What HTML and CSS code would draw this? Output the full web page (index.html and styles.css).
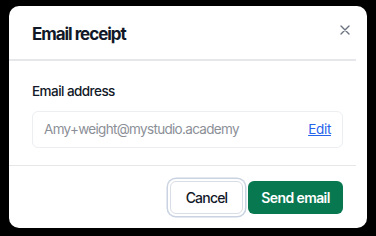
FILE: index.html
```html
<!DOCTYPE html>
<html>

<head>
	<link rel="stylesheet" href="styles.css">
</head>

<body>
	<div class="backdrop">
		<div class="dialog">
			<div class="header">
				<h1>Email receipt</h1>
				<button class="close" aria-label="Close">
					<svg width="10" height="10" viewBox="0 0 10 10">
						<path d="M1 1L9 9M9 1L1 9" stroke="#6b7280" stroke-width="1.4" stroke-linecap="round" />
					</svg>
				</button>
			</div>
			<div class="divider"></div>
			<div class="content">
				<label class="label">Email address</label>
				<div class="field">
					<span class="value">Amy+weight@mystudio.academy</span>
					<a class="edit" href="#">Edit</a>
				</div>
			</div>
			<div class="divider"></div>
			<div class="footer">
				<button class="btn cancel">Cancel</button>
				<button class="btn send">Send email</button>
			</div>
		</div>
	</div>
</body>

</html>
```

FILE: styles.css
```css
body {
	margin: 0;
	background-color: #000;
	font-family: Inter, "Noto Sans", sans-serif;
}

.backdrop {
	width: 376px;
	height: 236px;
	padding: 6px 9px 8px 9px;
	box-sizing: border-box;
}

.dialog {
	background-color: #fff;
	border-radius: 10px;
	height: 222px;
	display: flex;
	flex-direction: column;
}

.header {
	height: 53px;
	display: flex;
	align-items: center;
	justify-content: space-between;
	padding: 0 17px 0 23px;
	box-sizing: border-box;
}

h1 {
	margin: 0;
	font-size: 17px;
	font-weight: 700;
	color: #111827;
	letter-spacing: -1.05px;
	padding-top: 2px;
}

.close {
	border: none;
	background: none;
	padding: 0;
	width: 10px;
	height: 10px;
	display: flex;
	margin-top: -6px;
}

.divider {
	height: 1.5px;
	background-color: #e5e7eb;
	margin-right: 11px;
}

.content {
	padding: 21px 24px 0 23px;
	height: 104px;
	box-sizing: border-box;
}

.label {
	display: block;
	font-size: 13.5px;
	font-weight: 500;
	color: #111827;
	line-height: 18px;
	letter-spacing: -0.55px;
}

.field {
	margin-top: 11px;
	height: 37px;
	border: 1px solid #eceef2;
	border-radius: 6px;
	display: flex;
	align-items: center;
	justify-content: space-between;
	padding: 0 11px 0 11px;
	box-sizing: border-box;
}

.value {
	font-size: 13.5px;
	color: #8b8f97;
	letter-spacing: -0.68px;
}

.edit {
	font-size: 13.5px;
	color: #2563eb;
	text-decoration: underline;
	letter-spacing: -0.3px;
}

.footer {
	flex: 1;
	display: flex;
	justify-content: flex-end;
	align-items: center;
	gap: 5px;
	padding: 0 24px 0 0;
}

.btn {
	font-family: Inter, "Noto Sans", sans-serif;
	font-size: 14px;
	border-radius: 6px;
	height: 33px;
	cursor: pointer;
}

.cancel {
	width: 73px;
	background-color: #fff;
	color: #111827;
	font-weight: 500;
	letter-spacing: -0.8px;
	border: 1px solid #d9dee6;
	box-shadow: 0 0 0 2px #fff, 0 0 0 3.5px #c9d3e2;
}

.send {
	width: 95px;
	background-color: #077850;
	color: #fff;
	font-weight: 600;
	letter-spacing: -0.6px;
	border: none;
}
```
